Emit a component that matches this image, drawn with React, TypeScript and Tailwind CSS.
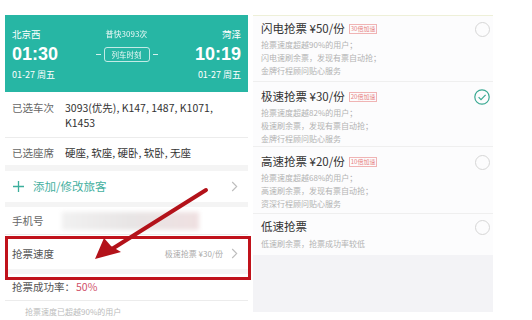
import React from 'react';

const font = { fontFamily: '"Noto Sans CJK SC", "Noto Sans", sans-serif' };
const latin = { fontFamily: '"Liberation Sans", sans-serif' };

const Chevron = () => (
  <svg width="7" height="11" viewBox="0 0 7 11" fill="none" stroke="#bdbdbd" strokeWidth="1.1">
    <path d="M1.2 1l4.5 4.5-4.5 4.5" />
  </svg>
);

const Radio = ({ checked }: { checked?: boolean }) =>
  checked ? (
    <svg width="16" height="16" viewBox="0 0 16 16" fill="none" stroke="#3aa992" strokeWidth="1.2">
      <circle cx="8" cy="8" r="7.2" />
      <path d="M4.6 8.2l2.4 2.4 4.6-4.8" />
    </svg>
  ) : (
    <div className="w-[15px] h-[15px] rounded-full border border-[#d6d6d6]" />
  );

const options = [
  {
    title: '闪电抢票 ¥50/份',
    badge: '30倍加速',
    lines: ['抢票速度超越90%的用户；', '闪电速刷余票，发现有票自动抢；', '金牌行程顾问贴心服务'],
    pad: 'pt-[4px] pb-[4px]',
  },
  {
    title: '极速抢票 ¥30/份',
    badge: '20倍加速',
    lines: ['抢票速度超越82%的用户；', '极速刷余票，发现有票自动抢；', '金牌行程顾问贴心服务'],
    checked: true,
    pad: 'pt-[6px] pb-[1px]',
  },
  {
    title: '高速抢票 ¥20/份',
    badge: '10倍加速',
    lines: ['抢票速度超越68%的用户；', '高速刷余票，发现有票自动抢；', '资深行程顾问贴心服务'],
    pad: 'pt-[6px] pb-[3px]',
  },
  {
    title: '低速抢票',
    lines: ['低速刷余票，抢票成功率较低'],
    pad: 'pt-[4px] pb-[5px]',
  },
];

const App: React.FC = () => {
  return (
    <div className="relative w-[532px] h-[320px] overflow-hidden bg-white" style={font}>
      <div className="flex pt-[15px]">
        {/* Left: order form */}
        <div className="ml-[5px] w-[243px] bg-white">
          <div className="h-[77px] bg-[#27b6a4] px-[7px] pt-[12px] flex justify-between text-white">
            <div>
              <div className="text-[9.5px] leading-[14px]">北京西</div>
              <div className="text-[18px] leading-[22px] font-bold mt-[2px]" style={latin}>01:30</div>
              <div className="text-[9px] leading-[14px] mt-[3px]">01-27 周五</div>
            </div>
            <div className="flex flex-col items-center">
              <div className="text-[8px] leading-[14px] opacity-90">普快3093次</div>
              <div className="flex items-center gap-[3px] mt-[6px]">
                <div className="w-[5px] h-px bg-white/80" />
                <div className="h-[15px] px-[7px] border border-white/80 rounded-[3px] text-[7.5px] leading-[13px] opacity-90">列车时刻</div>
                <div className="w-[5px] h-px bg-white/80" />
              </div>
            </div>
            <div className="flex flex-col items-end">
              <div className="text-[9.5px] leading-[14px]">菏泽</div>
              <div className="text-[18px] leading-[22px] font-bold mt-[2px]" style={latin}>10:19</div>
              <div className="text-[9px] leading-[14px] mt-[3px]">01-27 周五</div>
            </div>
          </div>

          <div className="flex pl-[7px] pt-[8px] pb-[7px] text-[10.5px] leading-[15px] border-b border-[#ececec]">
            <div className="w-[53px] shrink-0 text-[#666]">已选车次</div>
            <div className="text-[#333]">3093(优先), K147, 1487, K1071,<br />K1453</div>
          </div>
          <div className="flex pl-[7px] pt-[7px] pb-[5px] text-[10.5px] leading-[15px]">
            <div className="w-[53px] shrink-0 text-[#666]">已选座席</div>
            <div className="text-[#333]">硬座, 软座, 硬卧, 软卧, 无座</div>
          </div>
          <div className="h-[6px] bg-[#f4f4f4]" />
          <div className="h-[31px] flex items-center pl-[8px] pr-[10px]">
            <svg width="11" height="11" viewBox="0 0 11 11" stroke="#3cae9c" strokeWidth="1.3">
              <path d="M5.5 0v11M0 5.5h11" />
            </svg>
            <div className="ml-[9px] text-[11.5px] text-[#45b09f] flex-1">添加/修改旅客</div>
            <Chevron />
          </div>
          <div className="h-[5px] bg-[#f4f4f4]" />
          <div className="h-[28px] flex items-center pl-[7px] border-b border-[#ececec]">
            <div className="text-[10.5px] text-[#666]">手机号</div>
            <div className="ml-[18px] w-[137px] h-[18px] bg-gradient-to-r from-[#f1f1f1] via-[#e8e5e5] to-[#efe0e1] blur-[2px]" />
          </div>
          <div className="h-[34px] flex items-center pl-[7px] pr-[10px] pt-[3px]">
            <div className="text-[10.5px] text-[#555] flex-1">抢票速度</div>
            <div className="text-[8px] text-[#aaa] mr-[8px]">极速抢票 ¥30/份</div>
            <Chevron />
          </div>
          <div className="h-[5px] bg-[#f5f5f5]" />
          <div className="h-[27px] flex items-center pl-[7px] border-b border-[#ececec] text-[10.5px]">
            <span className="text-[#555]">抢票成功率：</span>
            <span className="text-[#d0506a] ml-[1px]">50%</span>
          </div>
          <div className="pl-[20px] pt-[5px] text-[8px] text-[#bbb]">抢票速度已超越90%的用户</div>
        </div>

        {/* Right: speed options */}
        <div className="ml-[5px] w-[240px] border-t border-[#eef0d8]">
          {options.map((o, i) => (
            <div key={i} className={`bg-[#fcfcfd] pl-[8px] pr-[3px] ${o.pad} ${i < 3 ? 'border-b border-[#efefef]' : ''}`}>
              <div className="flex items-center justify-between h-[18px]">
                <div className="flex items-center">
                  <span className="text-[11.5px] text-[#333]">{o.title}</span>
                  {o.badge && (
                    <span className="ml-[4px] h-[10px] px-[1px] border border-[#f0b4b4] text-[6px] leading-[8px] text-[#e88080]">{o.badge}</span>
                  )}
                </div>
                <Radio checked={o.checked} />
              </div>
              <div className={`${i === 3 ? 'mt-[1px]' : ''} text-[8px] leading-[13px] text-[#b2b2b2]`}>
                {o.lines.map((l) => (
                  <div key={l}>{l}</div>
                ))}
              </div>
            </div>
          ))}
          <div className="h-[57px] bg-[#f3f3f6]" />
        </div>
      </div>

      {/* Annotation: red frame and arrow */}
      <div className="absolute left-[5px] top-[236px] w-[246px] h-[44px] border-[3px] border-[#c0121b]" />
      <svg className="absolute left-0 top-0" width="532" height="320" viewBox="0 0 532 320">
        <path d="M206 190 L112 249" stroke="#b3121a" strokeWidth="4" strokeLinecap="round" />
        <path d="M95 259 L104 238 L111 246 L121 252 Z" fill="#b3121a" />
      </svg>
    </div>
  );
};

export default App;
